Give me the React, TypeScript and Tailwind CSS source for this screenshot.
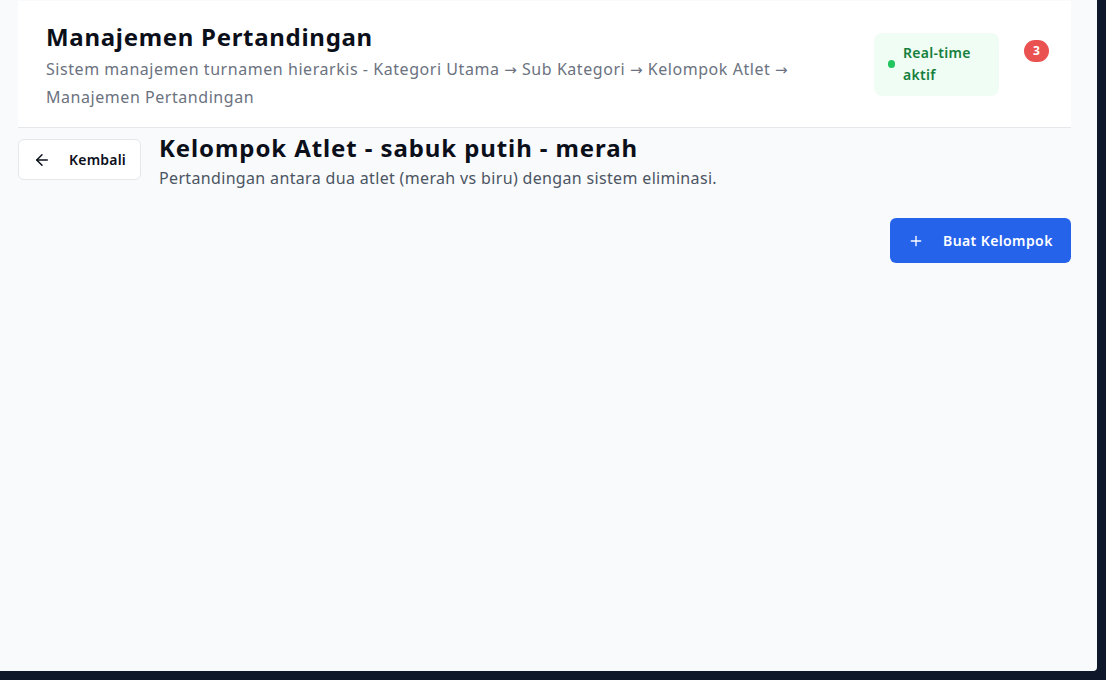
import React from "react";
import { ArrowLeft, Plus } from "lucide-react";

const Arr = () => <span className="font-['DejaVu_Sans'] text-[15px]">→</span>;

export default function App() {
  return (
    <div className="w-[1106px] h-[680px] bg-[#0f172a] overflow-hidden" style={{ fontFamily: '"Noto Sans", "Open Sans", sans-serif' }}>
      <div className="w-[1097px] h-[671px] bg-[#f9fafb] rounded-br-[4px] overflow-hidden pl-[18px] pr-[26px] pt-px">
        <header className="bg-white border-b border-gray-200 h-[127px] pl-[28px] pr-[22px] flex items-center">
          <div className="flex-1 min-w-0 pr-[24px] mt-[3px]">
            <h1 className="text-[24px] leading-[32px] font-bold text-[#0b0f1a] tracking-[0.7px]">Manajemen Pertandingan</h1>
            <p className="mt-[3px] text-[16px] leading-[27px] text-[#6b7280] max-w-[790px] tracking-[0.55px]">
              Sistem manajemen turnamen hierarkis - Kategori Utama <Arr /> Sub Kategori <Arr /> Kelompok Atlet <Arr /> Manajemen Pertandingan
            </p>
          </div>
          <div className="flex items-start gap-[25px]">
            <div className="w-[125px] h-[63px] bg-[#f0fdf4] rounded-lg pl-[14px] pr-3 flex items-center gap-2">
              <span className="w-[7px] h-[8px] rounded-full bg-[#22c55e] shrink-0" />
              <span className="text-[14px] leading-[22px] font-semibold text-[#15803d] tracking-[0.3px]">Real-time aktif</span>
            </div>
            <span className="mt-[7px] w-[25px] h-[22px] rounded-full bg-[#ea5252] text-white text-[12px] font-bold flex items-center justify-center">3</span>
          </div>
        </header>

        <div className="flex items-start gap-[18px] mt-[11px]">
          <button className="h-[41px] w-[123px] bg-white border border-gray-200 rounded-md pl-[14px] flex items-center gap-[18px] text-[14px] font-semibold text-[#0b0f1a] tracking-[0.2px]">
            <ArrowLeft size={18} strokeWidth={2} />
            Kembali
          </button>
          <div className="-mt-[7px]">
            <h2 className="text-[24px] leading-[32px] font-bold text-[#0b0f1a] tracking-[0.9px]">Kelompok Atlet - sabuk putih - merah</h2>
            <p className="mt-[2px] text-[16px] leading-[24px] text-[#4b5563] tracking-[0.34px]">Pertandingan antara dua atlet (merah vs biru) dengan sistem eliminasi.</p>
          </div>
        </div>

        <div className="flex justify-end mt-[28px]">
          <button className="h-[45px] w-[181px] bg-[#2563eb] rounded-md pl-[18px] flex items-center gap-[19px] text-white text-[14px] font-semibold tracking-[0.4px]">
            <Plus size={16} strokeWidth={2} />
            Buat Kelompok
          </button>
        </div>
      </div>
    </div>
  );
}
